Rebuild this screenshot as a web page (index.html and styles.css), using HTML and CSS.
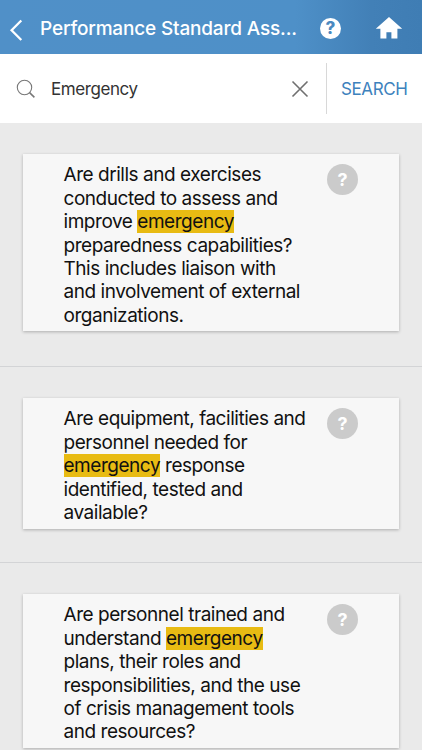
FILE: index.html
```html
<!DOCTYPE html>
<html lang="en">
<head>
<meta charset="utf-8">
<title>Performance Standard Assessment</title>
<link rel="stylesheet" href="styles.css">
</head>
<body>
<header class="topbar">
  <svg class="back" width="14" height="24" viewBox="0 0 14 24"><path d="M12.300 2.500 2.600 12.200 12.300 22" fill="none" stroke="#fff" stroke-width="2.3"/></svg>
  <h1 class="title">Performance Standard Ass...</h1>
  <span class="help">?</span>
  <svg class="home" width="28" height="24" viewBox="0 0 28 24"><path d="M14 1 .8 12.800H5.400V22.500h6v-6.200h5v6.200h6v-9.700H27.200Z" fill="#fff"/></svg>
</header>
<div class="searchbar">
  <svg class="lens" width="20" height="20" viewBox="0 0 20 20" fill="none" stroke="#777" stroke-width="1.100"><circle cx="8.500" cy="8.500" r="7.200"/><path d="m13.600 13.600 4.800 4.800" stroke-width="1.500"/></svg>
  <span class="query">Emergency</span>
  <svg class="clear" width="18" height="18" viewBox="0 0 18 18"><path d="m1.500 1.500 15 15m0-15-15 15" fill="none" stroke="#707070" stroke-width="1.600"/></svg>
  <div class="action">SEARCH</div>
</div>
<main>
  <section class="row">
    <article class="card">
      <p class="text">Are drills and exercises<br>conducted to assess and<br>improve <mark>emergency</mark><br>preparedness capabilities?<br>This includes liaison with<br>and involvement of external<br>organizations.</p>
      <span class="hint">?</span>
    </article>
  </section>
  <section class="row">
    <article class="card">
      <p class="text">Are equipment, facilities and<br>personnel needed for<br><mark>emergency</mark> response<br>identified, tested and<br>available?</p>
      <span class="hint">?</span>
    </article>
  </section>
  <section class="row">
    <article class="card">
      <p class="text">Are personnel trained and<br>understand <mark>emergency</mark><br>plans, their roles and<br>responsibilities, and the use<br>of crisis management tools<br>and resources?</p>
      <span class="hint">?</span>
    </article>
  </section>
</main>
</body>
</html>
```
FILE: styles.css
```css
* { box-sizing: border-box; }
body {
  margin: 0;
  height: 750px;
  overflow: hidden;
  background: #eaeaea;
  font-family: Inter, "Liberation Sans", sans-serif;
  color: #111;
}
.topbar {
  display: flex;
  align-items: center;
  height: 54px;
  padding: 3px 19px 0 9px;
  background: linear-gradient(90deg, #5090c8 0%, #4e90c8 70%, #4280b7 88%, #3f7db4 100%);
  color: #fff;
}
.back { margin: 2px 17px 0 0; }
.title {
  width: 280px;
  margin: 0;
  font-size: 19px;
  font-weight: 500;
  letter-spacing: -0.17px;
  white-space: nowrap;
}
.help {
  display: flex;
  align-items: center;
  justify-content: center;
  width: 21px;
  height: 21px;
  margin-top: -1px;
  border-radius: 50%;
  background: #fff;
  color: #4a89c0;
  font-size: 17px;
  font-weight: 800;
}
.home { margin-left: auto; margin-top: -2px; }
.searchbar {
  display: flex;
  align-items: center;
  height: 69px;
  padding-left: 16px;
  background: #fff;
}
.lens { margin-right: 15px; }
.query {
  flex: 1;
  font-size: 17px;
  letter-spacing: -0.42px;
  color: #333;
}
.clear { margin-right: 17px; }
.action {
  width: 96px;
  height: 51px;
  padding-left: 14px;
  border-left: 1px solid #d8d8d8;
  font-size: 17px;
  line-height: 52px;
  letter-spacing: -0.4px;
  color: #3d82bd;
}
.row {
  padding: 31px 23px 33.500px;
  border-bottom: 1px solid #d3d4d6;
}
.row:first-child { padding-bottom: 34.700px; }
.card {
  display: flex;
  padding: 9.300px 0 4.200px 40.500px;
  background: #f7f7f7;
  box-shadow: 0 1px 3px rgba(0, 0, 0, 0.26);
}
.text {
  width: 263.500px;
  margin: 0;
  font-size: 19px;
  line-height: 23.400px;
  letter-spacing: -0.46px;
  white-space: nowrap;
}
mark {
  background: #e8bb13;
  color: inherit;
}
.hint {
  display: flex;
  align-items: center;
  justify-content: center;
  width: 31px;
  height: 31px;
  margin-top: 1px;
  border-radius: 50%;
  background: #cbcbcb;
  color: #fff;
  font-size: 18px;
  font-weight: 700;
}
```
